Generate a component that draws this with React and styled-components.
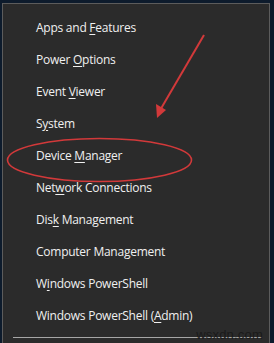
import React from 'react';
import styled, { createGlobalStyle } from 'styled-components';

const GlobalStyle = createGlobalStyle`
  html, body {
    margin: 0;
    padding: 0;
    background: #0d1b2c;
    overflow: hidden;
  }
`;

const Screen = styled.div`
  position: relative;
  width: 274px;
  height: 343px;
  padding: 3px 4px 0 2px;
  box-sizing: border-box;
  overflow: hidden;
`;

const Menu = styled.div`
  height: 350px;
  background: #2b2b2b;
  border: 1px solid #5c5c5c;
  border-bottom: none;
  box-sizing: border-box;
  padding: 7px 0 0 10px;
  display: flex;
  flex-direction: column;
`;

const Item = styled.div`
  height: 32px;
  display: flex;
  align-items: center;
  padding-left: 23px;
  font-family: "Segoe UI", "Open Sans", sans-serif;
  font-size: 12px;
  letter-spacing: -0.25px;
  color: #f0f0f0;
  white-space: pre;
`;

const Label = styled.span`
  display: inline-block;
`;

const Key = styled.span`
  text-decoration: underline;
  text-underline-offset: 2px;
`;

const Separator = styled.div`
  height: 1px;
  background: #a6a6a6;
  margin: 6px 7px 0 0;
`;

const Watermark = styled.div`
  position: absolute;
  right: 11px;
  bottom: 1px;
  font-family: "Liberation Sans", Arial, sans-serif;
  font-size: 13px;
  color: #1a1a1a;
  letter-spacing: 0.2px;
`;

const Overlay = styled.svg`
  position: absolute;
  left: 0;
  top: 0;
  pointer-events: none;
`;

const items = [
  ['Apps and ', 'F', 'eatures'],
  ['Power ', 'O', 'ptions'],
  ['Event ', 'V', 'iewer'],
  ['S', 'y', 'stem'],
  ['Device ', 'M', 'anager'],
  ['Net', 'w', 'ork Connections'],
  ['Dis', 'k', ' Management'],
  ['Computer Mana', 'g', 'ement'],
  ['W', 'i', 'ndows PowerShell'],
  ['Windows PowerShell (', 'A', 'dmin)'],
];

const App = () => (
  <>
    <GlobalStyle />
    <Screen>
      <Menu>
        {items.map(([a, k, b]) => (
          <Item key={a + k + b}>
            <Label>
              {a}
              <Key>{k}</Key>
              {b}
            </Label>
          </Item>
        ))}
        <Separator />
      </Menu>
      <Watermark>wsxdn.com</Watermark>
      <Overlay width="274" height="343" viewBox="0 0 274 343">
        <ellipse cx="99.5" cy="160" rx="92" ry="21.5" fill="none" stroke="#d2393a" strokeWidth="1.6" />
        <line x1="204" y1="35" x2="159" y2="112" stroke="#d2393a" strokeWidth="2" />
        <polygon points="157,118 156,104 166,110" fill="#d2393a" />
      </Overlay>
    </Screen>
  </>
);

export default App;
